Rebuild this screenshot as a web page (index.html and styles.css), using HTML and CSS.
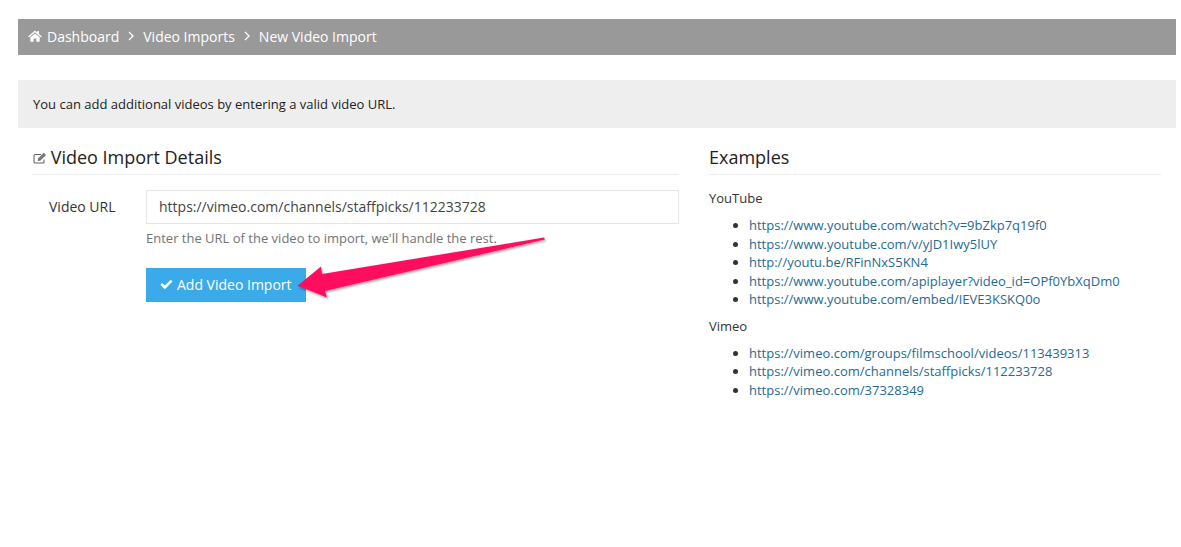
FILE: index.html
```html
<!DOCTYPE html>
<html lang="en">
<head>
  <meta charset="UTF-8" />
  <title>New Video Import</title>
  <link rel="stylesheet" href="styles.css">
</head>
<body>

  <div class="breadcrumb">
    <svg class="icon-home" viewBox="0 0 16 14" width="14" height="12"><path fill="#fff" d="M8 0.5 L10.6 2.8 V1.2 H12.6 V4.6 L16 7.6 L15 8.7 L8 2.6 L1 8.7 L0 7.6 Z M8 4 L13.4 8.6 V13.6 H9.6 V9.8 H6.4 V13.6 H2.6 V8.6 Z"/></svg>
    <a>Dashboard</a>
    <svg class="sep" viewBox="0 0 6 10" width="6" height="10"><path fill="none" stroke="#fff" stroke-width="1.3" d="M1 1 L5 5 L1 9"/></svg>
    <a>Video Imports</a>
    <svg class="sep" viewBox="0 0 6 10" width="6" height="10"><path fill="none" stroke="#fff" stroke-width="1.3" d="M1 1 L5 5 L1 9"/></svg>
    <a>New Video Import</a>
  </div>

  <div class="notice">You can add additional videos by entering a valid video URL.</div>

  <div class="columns">
    <div class="col-left">
      <h2>
        <svg class="icon-edit" viewBox="0 0 14 12" width="14" height="12"><path fill="none" stroke="#666" stroke-width="1.1" d="M11 7.5 V10 Q11 11 10 11 H2 Q1 11 1 10 V3.5 Q1 2.5 2 2.5 H8"/><path fill="#777" d="M5 6.5 L10.8 0.8 L13 3 L7.2 8.8 L4.8 9 Z"/></svg>
        Video Import Details
      </h2>
      <div class="field">
        <label for="url">Video URL</label>
        <div class="field-body">
          <input id="url" type="text" value="https://vimeo.com/channels/staffpicks/112233728" />
          <p class="help">Enter the URL of the video to import, we'll handle the rest.</p>
          <button type="button">
            <svg viewBox="0 0 14 11" width="13" height="11"><path fill="#fff" d="M0.5 5.8 L2.4 3.9 L5.2 6.7 L11.6 0.3 L13.5 2.2 L5.2 10.5 Z"/></svg>
            Add Video Import
          </button>
        </div>
      </div>
    </div>

    <div class="col-right">
      <h2>Examples</h2>
      <p class="group">YouTube</p>
      <ul>
        <li><a>https://www.youtube.com/watch?v=9bZkp7q19f0</a></li>
        <li><a>https://www.youtube.com/v/yJD1Iwy5lUY</a></li>
        <li><a>http://youtu.be/RFinNxS5KN4</a></li>
        <li><a>https://www.youtube.com/apiplayer?video_id=OPf0YbXqDm0</a></li>
        <li><a>https://www.youtube.com/embed/IEVE3KSKQ0o</a></li>
      </ul>
      <p class="group">Vimeo</p>
      <ul>
        <li><a>https://vimeo.com/groups/filmschool/videos/113439313</a></li>
        <li><a>https://vimeo.com/channels/staffpicks/112233728</a></li>
        <li><a>https://vimeo.com/37328349</a></li>
      </ul>
    </div>
  </div>

  <svg class="arrow" viewBox="0 0 270 80" width="270" height="80">
    <defs>
      <filter id="sombra" x="-10%" y="-30%" width="120%" height="170%">
        <feDropShadow dx="1" dy="1.5" stdDeviation="1.2" flood-color="#000" flood-opacity="0.4"/>
      </filter>
    </defs>
    <path fill="#ff0f5f" filter="url(#sombra)" d="M7.5 55.7 L31 36.5 L32 44 L254 7.5 L255 9.5 L35 61 L37 67.5 Z"/>
  </svg>

</body>
</html>
```

FILE: styles.css
```css
body {
  margin: 0;
  padding: 19px 5px 0 18px;
  font-family: "Open Sans", sans-serif;
  font-size: 13px;
  color: #333;
  background-color: #fff;
  position: relative;
}
.breadcrumb {
  display: flex;
  align-items: center;
  height: 36px;
  box-sizing: border-box;
  padding: 0 0 2px 10px;
  background-color: #999;
  color: #fff;
  font-size: 14px;
}
.icon-home { margin-right: 5px; }
.sep { margin: 0 9px; }
.notice {
  margin-top: 25px;
  height: 48px;
  line-height: 48px;
  padding-left: 15px;
  background-color: #eee;
  color: #222;
}
.columns {
  display: grid;
  grid-template-columns: 647px 452px;
  gap: 30px;
  padding: 0 15px 0 14px;
  margin-top: 17px;
}
h2 {
  margin: 0;
  height: 29px;
  line-height: 24px;
  font-size: 18px;
  font-weight: 400;
  color: #222;
  border-bottom: 1px solid #eee;
}
.col-right h2 { margin-bottom: 14px; }
.icon-edit { margin: 0 -1px 0 1px; }
.field {
  display: flex;
  margin-top: 15px;
}
label {
  width: 114px;
  padding-left: 17px;
  box-sizing: border-box;
  line-height: 34px;
  font-size: 14px;
  color: #333;
}
.field-body { flex: 1; }
input {
  display: block;
  width: 100%;
  height: 34px;
  box-sizing: border-box;
  padding: 0 12px 1px;
  border: 1px solid #e5e5e5;
  font-family: inherit;
  font-size: 14px;
  color: #444;
}
.help {
  margin: 5px 0 0;
  line-height: 18px;
  color: #737373;
}
button {
  display: flex;
  align-items: center;
  gap: 4px;
  margin-top: 21px;
  height: 34px;
  padding: 0 14px 1px;
  border: none;
  background-color: #3baaeb;
  color: #fff;
  font-family: inherit;
  font-size: 14px;
}
.group {
  margin: 0;
  line-height: 18px;
  color: #333;
}
ul {
  margin: 9px 0 8px;
  padding-left: 40px;
}
li {
  line-height: 18.5px;
}
li a { color: #1f6a94; }
.arrow {
  position: absolute;
  left: 290px;
  top: 230px;
}
```
